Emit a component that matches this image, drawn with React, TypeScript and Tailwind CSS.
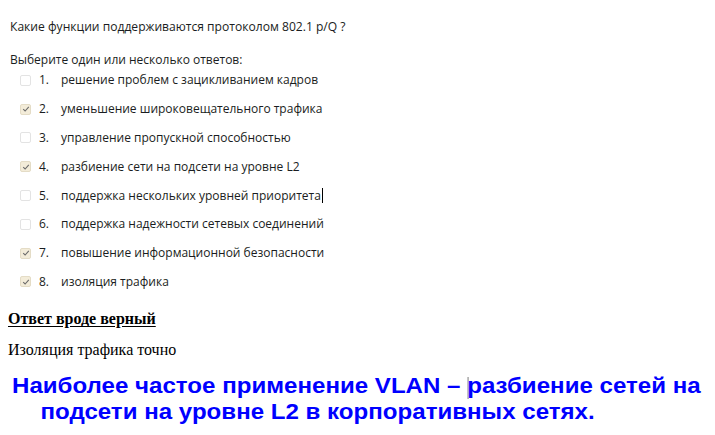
import React from "react";

const items: { n: string; t: string; c: boolean; caret?: boolean }[] = [
  { n: "1.", t: "решение проблем с зацикливанием кадров", c: false },
  { n: "2.", t: "уменьшение широковещательного трафика", c: true },
  { n: "3.", t: "управление пропускной способностью", c: false },
  { n: "4.", t: "разбиение сети на подсети на уровне L2", c: true },
  { n: "5.", t: "поддержка нескольких уровней приоритета", c: false, caret: true },
  { n: "6.", t: "поддержка надежности сетевых соединений", c: false },
  { n: "7.", t: "повышение информационной безопасности", c: true },
  { n: "8.", t: "изоляция трафика", c: true },
];

function Box({ checked }: { checked: boolean }) {
  return checked ? (
    <div className="w-[11px] h-[11px] rounded-[2px] bg-[#f3ecd9] border border-[#e4dcc6] flex items-center justify-center">
      <svg width="8" height="8" viewBox="0 0 8 8">
        <path d="M1.2 4.2 L3.1 6 L6.8 1.8" stroke="#6b6b6b" strokeWidth="1.1" fill="none" />
      </svg>
    </div>
  ) : (
    <div className="w-[11px] h-[11px] rounded-[2px] bg-white border border-[#e3e3e3]" />
  );
}

export default function App() {
  return (
    <div className="w-[715px] h-[435px] bg-white overflow-hidden relative">
      <div className="pl-[10px] pt-[19px] text-[12px] leading-[16px] text-[#1a1d21] [font-family:'Open_Sans','Noto_Sans',sans-serif]">
        <div className="text-[12.1px]">Какие функции поддерживаются протоколом 802.1 p/Q ?</div>
        <div className="mt-[17px]">Выберите один или несколько ответов:</div>
        <div className="flex flex-col -mt-[2px]">
          {items.map((it) => (
            <div key={it.n} className="h-[28.8px] flex items-center">
              <div className="ml-[10px] w-[19px]">
                <Box checked={it.c} />
              </div>
              <div className="w-[22px]">{it.n}</div>
              <div className="flex items-center">
                {it.t}
                {it.caret && <span className="inline-block w-[1px] h-[15px] bg-black ml-[1px]" />}
              </div>
            </div>
          ))}
        </div>
      </div>
      <div className="pl-[8px] mt-[14px] [font-family:'Liberation_Serif',serif] text-[16px] leading-[18px] text-black">
        <div className="font-bold underline underline-offset-[2px]">Ответ вроде верный</div>
        <div className="mt-[13px]">Изоляция трафика точно</div>
      </div>
      <div className="mt-[14px] pl-[12px] [font-family:'Liberation_Sans',Arial,sans-serif] font-bold text-[22px] leading-[25px] text-[#0000ff]">
        <div className="origin-left scale-x-[1.095] whitespace-nowrap">
          Наиболее частое применение VLAN –{" "}
          <span className="inline-block w-[1px] h-[22px] bg-[#888] align-middle -mr-[1px]" />
          разбиение сетей на
        </div>
        <div className="pl-[26px] origin-left scale-x-[1.095] whitespace-nowrap">подсети на уровне L2 в корпоративных сетях.</div>
      </div>
    </div>
  );
}
